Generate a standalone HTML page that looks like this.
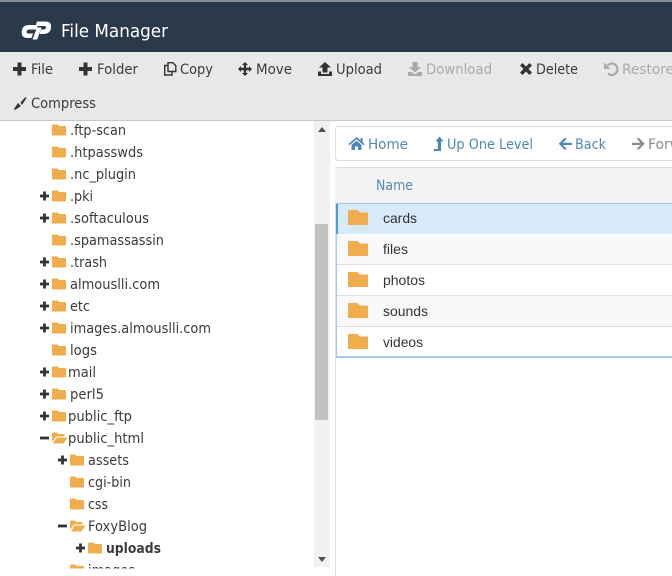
<!DOCTYPE html>
<html><head><meta charset="utf-8"><title>File Manager</title>
<style>
html,body{margin:0;padding:0;background:#fff;overflow:hidden}
svg{display:block}
text{font-family:"DejaVu Sans","Liberation Sans",sans-serif;font-size:14px;fill:#3b3b3b}
.d{fill:#aaa}.l{fill:#5288b5}.g{fill:#8a8a8a}
.a{font-family:"Liberation Sans",Arial,sans-serif;fill:#333}
</style></head><body>
<svg width="672" height="576" viewBox="0 0 672 576" xmlns="http://www.w3.org/2000/svg">
<defs>
<path id="f" fill="#f0ad4e" d="M0 1Q0 0 1 0H5.5L7 1.5H13Q14 1.5 14 2.5V10Q14 11 13 11H1Q0 11 0 10Z"/>
<path id="o" fill="#f0ad4e" d="M0 1Q0 0 1 0H5L6.5 1.5H11.5Q12.5 1.5 12.5 2.5V4H4L0 9.5ZM4.5 5H15.5L11.5 11H1Z"/>
<path id="b" fill="#f0ad4e" d="M0 0H9.5L12 2.5H20V15H0Z"/>
<path id="p" fill="#333" d="M-1.4-4.5H1.4V-1.4H4.5V1.4H1.4V4.5H-1.4V1.4H-4.5V-1.4H-1.4Z"/>
<path id="m" fill="#333" d="M-4.5-1.4H4.5V1.4H-4.5Z"/>
<path id="P" fill="#333" d="M-2-6.5H2V-2H6.5V2H2V6.5H-2V2H-6.5V-2H-2Z"/>
<path id="dl" d="M4.5 0H9.5V5H13L7 10.5 1 5H4.5ZM0 10H3.5L7 12.5 10.5 10H14V14H0Z"/>
<clipPath id="t"><rect x="0" y="121" width="314" height="447.5"/></clipPath>
</defs>
<!-- header -->
<rect width="672" height="52" fill="#2b3a4b"/>
<rect width="672" height="2" fill="#8a8f95"/>
<path fill="#fff" d="M38 25H29Q23 25 21.8 30.5 20.8 38 27.5 38H31.5L33 33.5H28.5Q26.3 33.5 26.7 31.5 27.2 29.5 29.5 29.5H36.5Z"/>
<path fill="#fff" d="M37 21.5H45Q52 21.5 51 28 50 34 43.5 34H39.5L41 29.5H43.5Q45.7 29.5 46 27.8 46.2 26 44 26H35.5ZM37 27.5H41.5L37.2 39.5H32.5Z"/>
<text x="61" y="37" textLength="107" lengthAdjust="spacingAndGlyphs" style="font-size:18px;fill:#fff">File Manager</text>
<!-- toolbar -->
<rect y="52" width="672" height="68" fill="#e8e8e8"/>
<rect y="120" width="672" height="1" fill="#c8c8c8"/>
<use href="#P" x="19.5" y="69"/>
<text x="31" y="74" textLength="22" lengthAdjust="spacingAndGlyphs">File</text>
<use href="#P" x="85.5" y="69"/>
<text x="97" y="74" textLength="41" lengthAdjust="spacingAndGlyphs">Folder</text>
<path fill="none" stroke="#333" stroke-width="1.4" d="M168 65.5H164.7V75H172V71.5M168 62.7H172.8L175.8 65.7V71.5H168Z"/>
<text x="180" y="74" textLength="33" lengthAdjust="spacingAndGlyphs">Copy</text>
<path fill="#333" d="M245 62L248 65H246.2V67.8H249V66L252 69 249 72V70.2H246.2V73H248L245 76 242 73H243.8V70.2H241V72L238 69 241 66V67.8H243.8V65H242Z"/>
<text x="256" y="74" textLength="36" lengthAdjust="spacingAndGlyphs">Move</text>
<path fill="#333" d="M325 62L331 67.5H327.5V72.5H322.5V67.5H319ZM318 71.5H321V74H329V71.5H332V76H318Z"/>
<text x="336" y="74" textLength="46" lengthAdjust="spacingAndGlyphs">Upload</text>
<use href="#dl" x="408" y="62" fill="#aaa"/>
<text class="d" x="426" y="74" textLength="66" lengthAdjust="spacingAndGlyphs">Download</text>
<path fill="#333" d="M520 65.5L522.5 63 526 66.5 529.5 63 532 65.5 528.5 69 532 72.5 529.5 75 526 71.5 522.5 75 520 72.5 523.5 69Z"/>
<text x="536" y="74" textLength="42" lengthAdjust="spacingAndGlyphs">Delete</text>
<path fill="none" stroke="#aaa" stroke-width="2.2" d="M607.5 65.5A5.7 5.7 0 1 1 608 73.5"/>
<path fill="#aaa" d="M604 62.5V69H610.5Z"/>
<text class="d" x="622" y="74" textLength="52" lengthAdjust="spacingAndGlyphs">Restore</text>
<path fill="#333" d="M20.5 102.5L25.5 97 26.5 98 22 105ZM14 109L18 103 21 106 15 110Z"/>
<text x="31" y="108" textLength="65" lengthAdjust="spacingAndGlyphs">Compress</text>
<!-- tree -->
<g clip-path="url(#t)">
<use href="#f" x="52" y="124.5"/><text x="70" y="135" textLength="56" lengthAdjust="spacingAndGlyphs">.ftp-scan</text>
<use href="#f" x="52" y="146.5"/><text x="70" y="157" textLength="73" lengthAdjust="spacingAndGlyphs">.htpasswds</text>
<use href="#f" x="52" y="168.5"/><text x="70" y="179" textLength="66" lengthAdjust="spacingAndGlyphs">.nc_plugin</text>
<use href="#p" x="44.5" y="196"/><use href="#f" x="52" y="190.5"/><text x="70" y="201" textLength="23" lengthAdjust="spacingAndGlyphs">.pki</text>
<use href="#p" x="44.5" y="218"/><use href="#f" x="52" y="212.5"/><text x="70" y="223" textLength="79" lengthAdjust="spacingAndGlyphs">.softaculous</text>
<use href="#f" x="52" y="234.5"/><text x="70" y="245" textLength="94" lengthAdjust="spacingAndGlyphs">.spamassassin</text>
<use href="#p" x="44.5" y="262"/><use href="#f" x="52" y="256.5"/><text x="70" y="267" textLength="37" lengthAdjust="spacingAndGlyphs">.trash</text>
<use href="#p" x="44.5" y="284"/><use href="#f" x="52" y="278.5"/><text x="70" y="289" textLength="90" lengthAdjust="spacingAndGlyphs">almouslli.com</text>
<use href="#p" x="44.5" y="306"/><use href="#f" x="52" y="300.5"/><text x="70" y="311" textLength="20" lengthAdjust="spacingAndGlyphs">etc</text>
<use href="#p" x="44.5" y="328"/><use href="#f" x="52" y="322.5"/><text x="70" y="333" textLength="141" lengthAdjust="spacingAndGlyphs">images.almouslli.com</text>
<use href="#f" x="52" y="344.5"/><text x="70" y="355" textLength="27" lengthAdjust="spacingAndGlyphs">logs</text>
<use href="#p" x="44.5" y="372"/><use href="#f" x="52" y="366.5"/><text x="68" y="377" textLength="28" lengthAdjust="spacingAndGlyphs">mail</text>
<use href="#p" x="44.5" y="394"/><use href="#f" x="52" y="388.5"/><text x="70" y="399" textLength="34" lengthAdjust="spacingAndGlyphs">perl5</text>
<use href="#p" x="44.5" y="416"/><use href="#f" x="52" y="410.5"/><text x="68" y="421" textLength="64" lengthAdjust="spacingAndGlyphs">public_ftp</text>
<use href="#m" x="44.5" y="438"/><use href="#o" x="52" y="432.5"/><text x="68" y="443" textLength="76" lengthAdjust="spacingAndGlyphs">public_html</text>
<use href="#p" x="62.5" y="460"/><use href="#f" x="70" y="454.5"/><text x="88" y="465" textLength="41" lengthAdjust="spacingAndGlyphs">assets</text>
<use href="#f" x="70" y="476.5"/><text x="88" y="487" textLength="43" lengthAdjust="spacingAndGlyphs">cgi-bin</text>
<use href="#f" x="70" y="498.5"/><text x="88" y="509" textLength="20" lengthAdjust="spacingAndGlyphs">css</text>
<use href="#m" x="62.5" y="526"/><use href="#o" x="70" y="520.5"/><text x="88" y="531" textLength="59" lengthAdjust="spacingAndGlyphs">FoxyBlog</text>
<use href="#p" x="80.5" y="548"/><use href="#f" x="88" y="542.5"/><text x="106" y="553" textLength="55" lengthAdjust="spacingAndGlyphs" style="font-weight:bold">uploads</text>
<use href="#f" x="70" y="564.5"/><text x="88" y="575" textLength="47" lengthAdjust="spacingAndGlyphs">images</text>
</g>
<!-- scrollbar -->
<rect x="314" y="121" width="16" height="446" fill="#f1f1f1"/>
<rect x="315" y="224" width="13" height="196" fill="#c1c1c1"/>
<path fill="#505050" d="M322 127L326 132H318Z M318 557H326L322 562Z"/>
<!-- nav -->
<rect x="335.5" y="126.5" width="340" height="34" rx="3" fill="#fff" stroke="#ddd"/>
<path fill="#4a86b8" d="M356.5 137L360.5 140.5V138H362.5V142.3L364.5 144 363.5 145.2 356.5 139.2 349.5 145.2 348.5 144ZM356.5 140.7L361.5 145V150H358V146.5H355V150H351.5V145Z"/>
<text class="l" x="368" y="149" textLength="40" lengthAdjust="spacingAndGlyphs">Home</text>
<path fill="#4a86b8" d="M439.5 136.5L443.5 141.5H441V151H434V149H437.8V141.5H435.5Z"/>
<text class="l" x="447" y="149" textLength="86" lengthAdjust="spacingAndGlyphs">Up One Level</text>
<path fill="#4a86b8" d="M565 137.5L566.5 139 562.8 142.7H572V145H562.8L566.5 148.5 565 150 558.8 143.8Z"/>
<text class="l" x="575" y="149" textLength="31" lengthAdjust="spacingAndGlyphs">Back</text>
<path fill="#8a8a8a" d="M638.5 137.5L637 139 640.7 142.7H632V145H640.7L637 148.5 638.5 150 644.7 143.8Z"/>
<text class="g" x="648" y="149" textLength="56" lengthAdjust="spacingAndGlyphs">Forward</text>
<!-- table -->
<rect x="335" y="167" width="1" height="409" fill="#ddd"/>
<rect x="335" y="167" width="337" height="36" fill="#f3f3f3"/>
<rect x="335" y="167" width="337" height="1" fill="#ddd"/>
<text x="376" y="190" textLength="37" lengthAdjust="spacingAndGlyphs" style="fill:#4f8ab8">Name</text>
<rect x="336" y="203" width="336" height="31" fill="#d7eafa"/>
<rect x="336" y="203" width="336" height="1" fill="#a9c8e8"/>
<rect x="336" y="204" width="2" height="30" fill="#4a9ad8"/>
<rect x="336" y="234" width="336" height="31" fill="#f9f9f9"/>
<rect x="336" y="265" width="336" height="31" fill="#fff"/>
<rect x="336" y="296" width="336" height="31" fill="#f9f9f9"/>
<rect x="336" y="327" width="336" height="30" fill="#fff"/>
<rect x="336" y="264" width="336" height="1" fill="#ddd"/>
<rect x="336" y="295" width="336" height="1" fill="#ddd"/>
<rect x="336" y="326" width="336" height="1" fill="#ddd"/>
<rect x="336" y="234" width="1" height="123" fill="#a9c8ee"/>
<rect x="336" y="356" width="336" height="2" fill="#a9c8ee"/>
<use href="#b" x="348" y="210"/><text class="a" x="383" y="223" textLength="34" lengthAdjust="spacingAndGlyphs">cards</text>
<use href="#b" x="348" y="241"/><text class="a" x="383" y="254" textLength="25" lengthAdjust="spacingAndGlyphs">files</text>
<use href="#b" x="348" y="272"/><text class="a" x="383" y="285" textLength="42" lengthAdjust="spacingAndGlyphs">photos</text>
<use href="#b" x="348" y="303"/><text class="a" x="383" y="316" textLength="45" lengthAdjust="spacingAndGlyphs">sounds</text>
<use href="#b" x="348" y="334"/><text class="a" x="383" y="347" textLength="40" lengthAdjust="spacingAndGlyphs">videos</text>
</svg>
</body></html>
